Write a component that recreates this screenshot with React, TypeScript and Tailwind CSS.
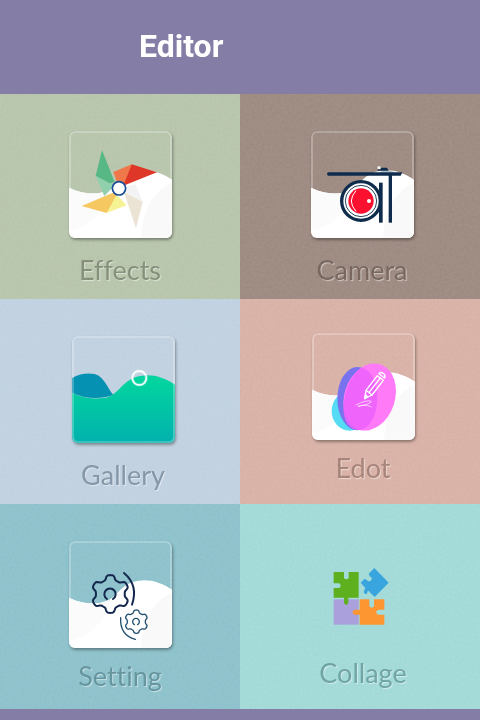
import type { ReactNode } from "react";
import { clsx } from "clsx";

/** Closed gear outline with six soft teeth, one of them pointing up. */
function gearPath(cx: number, cy: number, outer: number, inner: number): string {
  const mid = (outer + inner) / 2;
  const amp = (outer - inner) / 2;
  const points: string[] = [];
  for (let deg = 0; deg < 360; deg += 3) {
    const wave = Math.cos((deg * 6 * Math.PI) / 180);
    const r = mid + amp * Math.tanh(wave * 2);
    const a = ((deg - 90) * Math.PI) / 180;
    points.push(`${(cx + r * Math.cos(a)).toFixed(1)} ${(cy + r * Math.sin(a)).toFixed(1)}`);
  }
  return `M${points.join("L")}Z`;
}

const WAVE = "M0 170C30 185 60 189 88 187C128 184 140 155 165 137C205 108 260 112 309 146V321H0Z";

function Hills() {
  return (
    <>
      <path d={WAVE} fill="#fff" />
      <path d="M0 170C30 185 60 189 88 187L123 176C112 230 75 285 0 299Z" fill="#fbfbfb" />
      <path d="M309 155C255 175 215 245 217 321H309Z" fill="#f9f9f9" />
    </>
  );
}

/** Rounded glass card that holds the drawing of a tile. */
function Card({ children }: { children: ReactNode }) {
  return (
    <span className="block overflow-hidden rounded-md shadow-[1px_2px_3px_rgba(0,0,0,0.35)]">
      <svg viewBox="0 0 309 321" className="h-[107px] w-[103px]" aria-hidden="true">
        {children}
        <rect x="3" y="3" width="303" height="315" rx="15" fill="none" stroke="#fff" strokeOpacity="0.3" strokeWidth="5" />
      </svg>
    </span>
  );
}

function EffectsIcon() {
  return (
    <Card>
      <Hills />
      <g transform="translate(-27 -33)">
        <path d="M107 167L165 195L133 228Z" fill="#90d0ad" />
        <path d="M126 90L164 186L150 190L107 167Z" fill="#57b886" />
        <path d="M215 133L160 156L172 190L194 194Z" fill="#ef784b" />
        <path d="M215 133L291 157L190 197Z" fill="#de3728" />
        <path d="M226 192L248 245L192 219L196 200Z" fill="#f4f3f3" />
        <path d="M192 217L248 245L228 325Z" fill="#ebe4d4" />
        <path d="M168 222L200 256L140 279Z" fill="#f6f394" />
        <path d="M65 258L164 216L170 224L140 279Z" fill="#f5c861" />
        <circle cx="177" cy="205" r="20" fill="#fff" stroke="#184b96" strokeWidth="5" />
      </g>
    </Card>
  );
}

function CameraIcon() {
  return (
    <Card>
      <Hills />
      <g transform="translate(-35 -33)">
        <path d="M248 152L270 151L292 158H240Z" fill="#b9c2c8" />
        <path d="M86 157H309L304 167H86Q80 162 86 157Z" fill="#0f2c4c" />
        <path d="M245 143H263L268 152H235V148H245Z" fill="#0f2c4c" />
        <circle cx="239" cy="143" r="5" fill="#eef3ea" />
        <rect x="239" y="188" width="11" height="120" fill="#0f2c4c" />
        <rect x="268" y="164" width="10" height="144" fill="#0f2c4c" />
        <circle cx="185" cy="243" r="58" fill="#fff" stroke="#0f2c4c" strokeWidth="10" />
        <circle cx="185" cy="243" r="47" fill="none" stroke="#2b4661" strokeWidth="3" />
        <circle cx="185" cy="243" r="38" fill="#fb1030" />
        <path d="M170 212Q142 243 170 274" fill="none" stroke="#fff" strokeWidth="3" />
        <circle cx="209" cy="243" r="6" fill="#fff" />
      </g>
    </Card>
  );
}

function GalleryIcon() {
  return (
    <Card>
      <defs>
        <linearGradient id="hill" x1="0" y1="0" x2="0" y2="1">
          <stop offset="0.1" stopColor="#02d39f" />
          <stop offset="1" stopColor="#02b1ae" />
        </linearGradient>
      </defs>
      <path d={WAVE} fill="url(#hill)" />
      <path d="M0 126C30 108 65 110 80 119C98 130 112 163 123 176C90 190 40 190 0 170Z" fill="#0591b1" />
      <circle cx="202" cy="126" r="21" fill="none" stroke="#fff" strokeOpacity="0.4" strokeWidth="9" />
      <circle cx="202" cy="126" r="21" fill="none" stroke="#fff" strokeWidth="4" />
    </Card>
  );
}

function EditIcon() {
  return (
    <Card>
      <Hills />
      <g transform="translate(-35 -22)">
        <ellipse cx="148" cy="256" rx="54" ry="59" fill="#55dcf4" />
        <ellipse cx="171" cy="219" rx="60" ry="95" fill="#7872ee" />
        <ellipse cx="208" cy="214" rx="76" ry="103" fill="#ff7af6" transform="rotate(18 208 214)" />
        <path d="M185 126C246 142 247 286 187 311C149 322 125 285 130 236C135 185 156 144 185 126Z" fill="#ec61fd" fillOpacity="0.85" />
        <g fill="none" stroke="#fff" strokeWidth="4" strokeLinejoin="round" strokeLinecap="round">
          <path d="M193 219L197 194L231 150L249 164L215 208Z" />
          <path d="M197 194L215 208M206 200L240 157" />
          <path d="M236 144Q241 137 250 144Q257 151 252 157Z" />
          <path d="M193 219L196 208L202 213Z" fill="#fff" />
          <path d="M167 238C184 228 208 222 213 228C211 234 187 239 173 242C191 237 207 239 213 244" strokeWidth="2" />
        </g>
      </g>
    </Card>
  );
}

function SettingIcon() {
  return (
    <Card>
      <Hills />
      <g transform="translate(-27 -33)" fill="none" strokeLinecap="round" strokeLinejoin="round">
        <g stroke="#14284d" strokeWidth="6">
          <path d={gearPath(151, 192, 57, 43)} />
          <path d="M141 207A17 17 0 1 1 159 207" />
          <path d="M192 129Q236 166 216 224" />
        </g>
        <g stroke="#245070" strokeWidth="4">
          <path d={gearPath(229, 275, 35, 27)} />
          <path d="M223 284A10 10 0 1 1 233 284" />
          <path d="M182 263Q179 315 226 328" />
        </g>
      </g>
    </Card>
  );
}

function CollageIcon() {
  return (
    <svg viewBox="0 0 309 321" className="h-[107px] w-[103px]" aria-hidden="true">
      <g transform="translate(-34 35)">
        <path d="M99 149H174V225H99Z" fill="#aaa0dc" />
        <path d="M99 67H130V80Q128 88 137 89Q146 88 144 80V67H174V144H143V157Q143 165 137 165Q130 165 130 157V144H99V115H109Q120 117 120 108Q120 99 109 101H99Z" fill="#5fb01f" />
        <path d="M177 149H206V164Q204 173 213 174Q222 173 220 164V149H251V180H236Q227 180 227 188Q227 195 236 195H251V225H177V195H164Q156 195 156 188Q156 180 164 180H177Z" fill="#fd9631" />
        <path d="M221 55L264 99L222 142L203 123L199 127Q202 133 194 133Q187 130 191 122L194 115L180 99L192 87L201 93Q207 98 212 91Q216 84 207 80L204 72Z" fill="#38a5df" />
      </g>
    </svg>
  );
}

interface Tile {
  label: string;
  icon: ReactNode;
  tone: string;
  pad: string;
}

const TILES: Tile[] = [
  { label: "Effects", icon: <EffectsIcon />, tone: "bg-[#b6c4aa] text-[#828c75]", pad: "gap-4 pt-[37px] pb-[13px]" },
  { label: "Camera", icon: <CameraIcon />, tone: "bg-[#9b887f] text-[#746259]", pad: "gap-4 pt-[37px] pb-[13px] pl-1" },
  { label: "Gallery", icon: <GalleryIcon />, tone: "bg-[#bfd0e0] text-[#8193a5]", pad: "gap-4 pt-[37px] pb-[13px] pl-1.5" },
  { label: "Edot", icon: <EditIcon />, tone: "bg-[#d8b0a5] text-[#a57f75]", pad: "gap-3 pt-[34px] pb-5 pl-1.5" },
  { label: "Setting", icon: <SettingIcon />, tone: "bg-[#8bc0ca] text-[#60929c]", pad: "gap-3 pt-[37px] pb-[17px]" },
  { label: "Collage", icon: <CollageIcon />, tone: "bg-[#a0d9d7] text-[#6ba1a1]", pad: "gap-3 pt-[34px] pb-5 pl-1.5" },
];

/** Fine paper grain laid over the tiles, under their icons. */
function Grain() {
  return (
    <svg className="pointer-events-none absolute inset-0 h-full w-full opacity-20 mix-blend-soft-light" aria-hidden="true">
      <filter id="grain">
        <feTurbulence type="fractalNoise" baseFrequency="0.4" numOctaves="2" />
        <feColorMatrix values="1 0 0 0 0  1 0 0 0 0  1 0 0 0 0  0 0 0 0 1" />
      </filter>
      <rect width="100%" height="100%" filter="url(#grain)" />
    </svg>
  );
}

export default function App() {
  return (
    <div className="min-h-screen bg-[#847ea6]">
      <header className="pt-[26px] pb-7 pl-[139px]">
        <h1 className="font-[Roboto,sans-serif] text-[32px] leading-10 font-bold text-white">Editor</h1>
      </header>

      <main className="relative grid grid-cols-2">
        {TILES.map((tile) => (
          <button
            key={tile.label}
            type="button"
            className={clsx("flex flex-col items-center", tile.tone, tile.pad)}
          >
            <span className="relative z-10 block">{tile.icon}</span>
            <span className="font-[Lato,sans-serif] text-[27px] leading-8 [font-variant-ligatures:none] [text-shadow:1px_1px_1px_rgba(255,255,255,0.5)]">
              {tile.label}
            </span>
          </button>
        ))}
        <Grain />
      </main>
    </div>
  );
}
